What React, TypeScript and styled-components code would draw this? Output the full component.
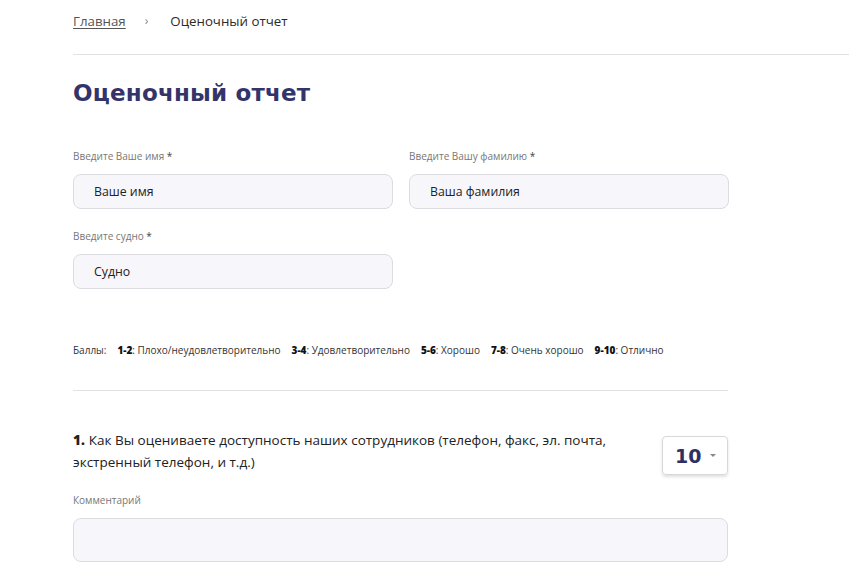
import React from "react";
import styled, { createGlobalStyle } from "styled-components";

const Global = createGlobalStyle`
  html, body { margin: 0; padding: 0; background: #fff; }
  body { font-family: "Open Sans", "Noto Sans", sans-serif; color: #222; }
  * { box-sizing: border-box; }
`;

const Page = styled.div`
  padding-left: 73px;
  overflow: hidden;
  width: 849px;
`;

const Breadcrumbs = styled.nav`
  display: flex;
  align-items: center;
  font-size: 13.3px;
  color: #2a2a2a;
  border-bottom: 1px solid #e2e2e2;
  margin-bottom: 15px;
  margin-right: -73px;
  height: 55px;
  padding-top: 1px;
  padding-bottom: 14px;
`;

const Crumb = styled.a`
  color: #555;
  text-decoration: underline;
  text-underline-offset: 2px;
`;

const Sep = styled.span`
  color: #888;
  margin: 0 22px 0 19px;
  font-size: 12px;
`;

const Content = styled.div`
  width: 655px;
`;

const Title = styled.h1`
  margin: 0;
  font-family: "DejaVu Sans", sans-serif;
  font-weight: 700;
  font-size: 23px;
  line-height: 46px;
  color: #33356a;
  letter-spacing: 0.2px;
`;

const FieldsGrid = styled.div`
  display: grid;
  grid-template-columns: 320px 320px;
  column-gap: 16px;
  row-gap: 19px;
  margin-top: 32px;
`;

const Field = styled.div`
  display: flex;
  flex-direction: column;
`;

const Label = styled.label`
  font-size: 10px;
  color: #777;
  height: 12px;
  line-height: 12px;
  margin-bottom: 12px;
  margin-top: 2px;
`;

const Req = styled.span`
  color: #444;
`;

const Input = styled.div<{ $h?: number }>`
  height: ${(p) => p.$h ?? 35}px;
  border: 1px solid #dcdce0;
  border-radius: 8px;
  background: #f7f7fb;
  display: flex;
  align-items: center;
  padding-left: 20px;
  font-size: 12.3px;
  color: #222;
`;

const Scores = styled.div`
  margin-top: 54px;
  font-size: 10px;
  color: #333;
  display: flex;
  gap: 11px;
  height: 14px;
  align-items: center;
`;

const Score = styled.span`
  b { font-weight: 800; color: #111; }
`;

const Divider = styled.hr`
  border: 0;
  border-top: 1px solid #e2e2e2;
  margin: 33px 0 0 0;
`;

const Question = styled.div`
  display: flex;
  justify-content: space-between;
  align-items: flex-start;
  margin-top: 38px;
`;

const QText = styled.p`
  margin: 0;
  font-size: 13.5px;
  line-height: 22px;
  width: 570px;
  color: #222;
`;

const QNum = styled.span`
  font-weight: 800;
  margin-right: 4px;
`;

const Select = styled.div`
  width: 66px;
  height: 39px;
  margin-top: 7px;
  border: 1px solid #d8d8d8;
  border-radius: 4px;
  box-shadow: 0 2px 3px rgba(0, 0, 0, 0.12);
  display: flex;
  align-items: center;
  padding-left: 12px;
  gap: 9px;
  font-family: "DejaVu Sans", sans-serif;
  font-weight: 700;
  font-size: 19px;
  color: #2e3063;
`;

const Caret = styled.span`
  width: 0;
  height: 0;
  border-left: 3.5px solid transparent;
  border-right: 3.5px solid transparent;
  border-top: 3.5px solid #888;
`;

const CommentLabel = styled(Label)`
  margin-top: 19px;
`;

export default function App() {
  return (
    <>
      <Global />
      <Page>
        <Breadcrumbs>
          <Crumb>Главная</Crumb>
          <Sep>›</Sep>
          <span>Оценочный отчет</span>
        </Breadcrumbs>
        <Content>
          <Title>Оценочный отчет</Title>
          <FieldsGrid>
            <Field>
              <Label>
                Введите Ваше имя <Req>*</Req>
              </Label>
              <Input>Ваше имя</Input>
            </Field>
            <Field>
              <Label>
                Введите Вашу фамилию <Req>*</Req>
              </Label>
              <Input>Ваша фамилия</Input>
            </Field>
            <Field>
              <Label>
                Введите судно <Req>*</Req>
              </Label>
              <Input>Судно</Input>
            </Field>
          </FieldsGrid>
          <Scores>
            <span>Баллы:</span>
            <Score>
              <b>1-2</b>: Плохо/неудовлетворительно
            </Score>
            <Score>
              <b>3-4</b>: Удовлетворительно
            </Score>
            <Score>
              <b>5-6</b>: Хорошо
            </Score>
            <Score>
              <b>7-8</b>: Очень хорошо
            </Score>
            <Score>
              <b>9-10</b>: Отлично
            </Score>
          </Scores>
          <Divider />
          <Question>
            <QText>
              <QNum>1.</QNum>Как Вы оцениваете доступность наших сотрудников (телефон, факс, эл. почта,
              экстренный телефон, и т.д.)
            </QText>
            <Select>
              10
              <Caret />
            </Select>
          </Question>
          <Field>
            <CommentLabel>Комментарий</CommentLabel>
            <Input $h={44} />
          </Field>
        </Content>
      </Page>
    </>
  );
}
